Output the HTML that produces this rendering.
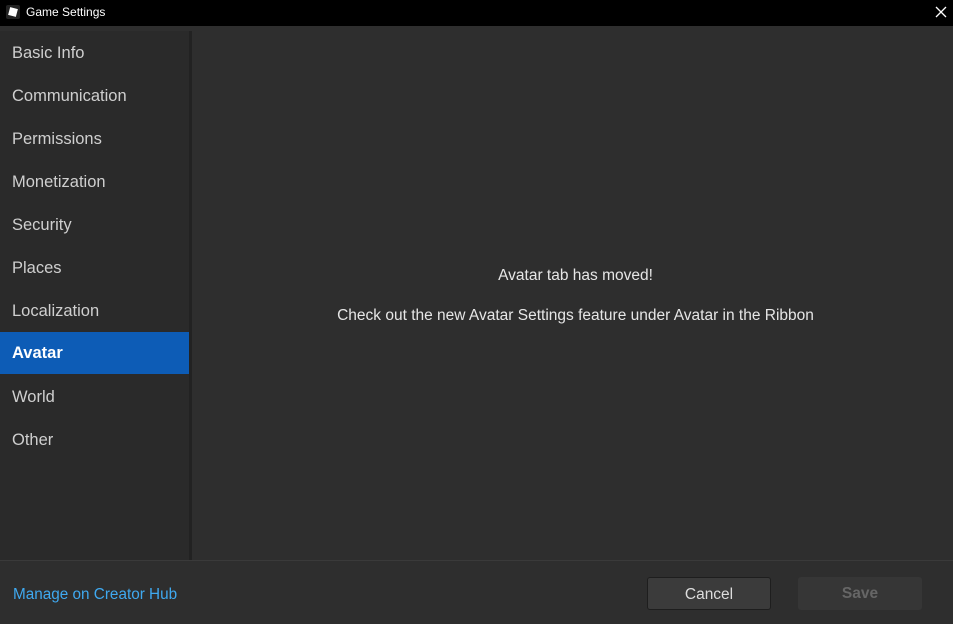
<!DOCTYPE html>
<html><head><style>
*{margin:0;padding:0;box-sizing:border-box}
body{width:953px;height:624px;background:#2e2e2e;font-family:"Liberation Sans",sans-serif;position:relative;overflow:hidden}
.title{position:absolute;left:0;top:0;width:953px;height:26px;background:#000;color:#fff;font-size:12px}
.title .t{position:absolute;left:26px;top:5px}
.logo{position:absolute;left:6px;top:5px;width:14px;height:14px;background:#222;border-radius:2px}
.logo:after{content:"";position:absolute;left:3px;top:3px;width:8px;height:8px;background:#fff;transform:rotate(15deg)}
.x{position:absolute;left:935px;top:6px}
.side{position:absolute;left:0;top:31px;width:189px;height:529px;background:#2a2a2a}
.strip{position:absolute;left:189px;top:31px;width:3px;height:529px;background:#222}
.item{position:absolute;left:0;width:189px;height:42px;line-height:42px;padding-left:12px;font-size:16.5px;color:#cfcfcf}
.item.sel{background:#0d5cb6;color:#fff;font-weight:bold}
.div{position:absolute;left:0;top:560px;width:953px;height:1px;background:#3a3a3a}
.msg{position:absolute;left:192px;width:767px;text-align:center;color:#e6e6e6;font-size:15.5px}
.link{position:absolute;left:13px;top:586px;color:#3fa9f0;font-size:15.3px}
.btn{position:absolute;top:577px;width:124px;height:33px;border-radius:3px;text-align:center;line-height:33px;font-size:15.5px}
</style></head><body>
<div class="title"><div class="logo"></div><span class="t">Game Settings</span>
<svg class="x" width="12" height="12" viewBox="0 0 12 12"><path d="M1 1L11 11M11 1L1 11" stroke="#fff" stroke-width="1.3"/></svg></div>
<div class="side"></div><div class="strip"></div>
<div class="item" style="top:32px">Basic Info</div>
<div class="item" style="top:75px">Communication</div>
<div class="item" style="top:118px">Permissions</div>
<div class="item" style="top:161px">Monetization</div>
<div class="item" style="top:204px">Security</div>
<div class="item" style="top:247px">Places</div>
<div class="item" style="top:290px">Localization</div>
<div class="item sel" style="top:332px">Avatar</div>
<div class="item" style="top:376px">World</div>
<div class="item" style="top:419px">Other</div>
<div class="msg" style="top:267px">Avatar tab has moved!</div>
<div class="msg" style="top:307px">Check out the new Avatar Settings feature under Avatar in the Ribbon</div>
<div class="div"></div>
<div class="link">Manage on Creator Hub</div>
<div class="btn" style="left:647px;background:#3b3b3b;border:1px solid #1e1e1e;color:#ddd">Cancel</div>
<div class="btn" style="left:798px;background:#363636;color:#666;font-weight:bold">Save</div>
</body></html>
